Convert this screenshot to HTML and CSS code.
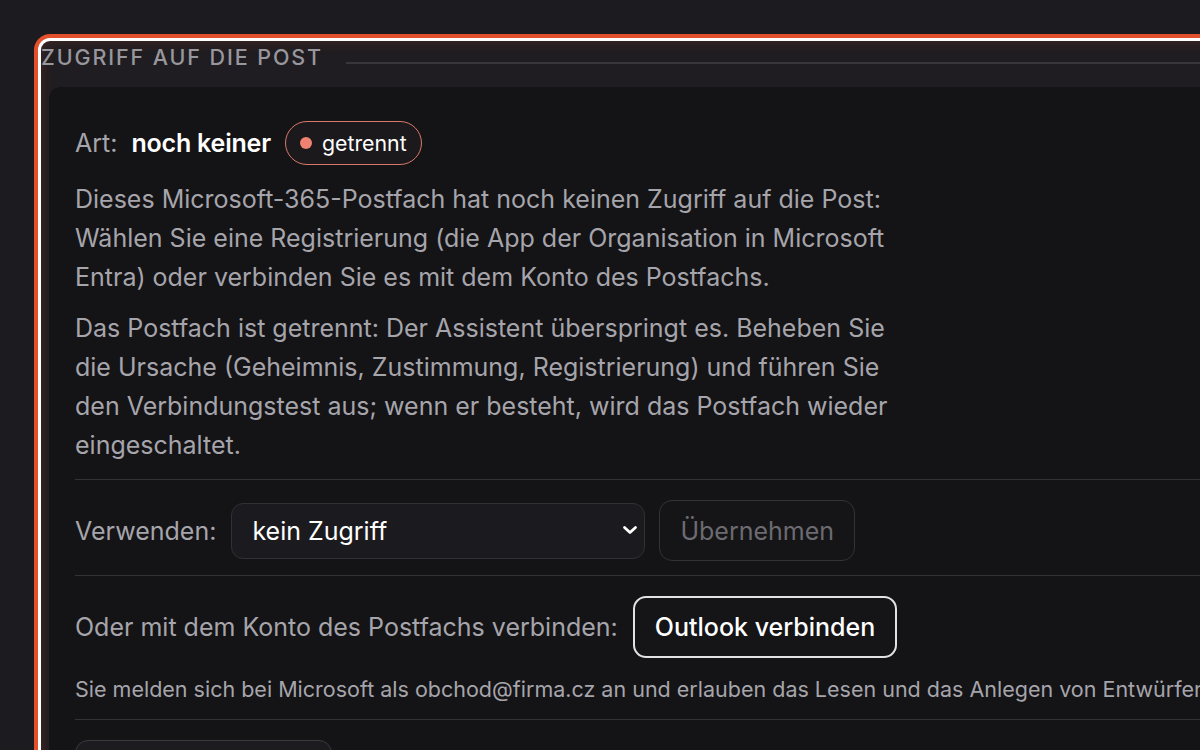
FILE: index.html
```html
<!DOCTYPE html>
<html lang="de">
<head>
    <meta charset="UTF-8">
    <meta name="viewport" content="width=device-width, initial-scale=1.0">
    <title>Postfach - Zugriff</title>
    <link rel="stylesheet" href="styles.css">
</head>
<body>
    <!-- Zugriff section (focused) -->
    <section class="access-section">
        <div class="section-head">
            <h2>Zugriff auf die Post</h2>
            <span class="head-line"></span>
        </div>

        <div class="access-card">
            <div class="type-row">
                <span class="type-label">Art:</span>
                <span class="type-value">noch keiner</span>
                <span class="status-badge"><span class="status-dot"></span>getrennt</span>
            </div>

            <p class="hint">Dieses Microsoft-365-Postfach hat noch keinen Zugriff auf die Post: Wählen Sie eine Registrierung (die App der Organisation in Microsoft Entra) oder verbinden Sie es mit dem Konto des Postfachs.</p>
            <p class="hint">Das Postfach ist getrennt: Der Assistent überspringt es. Beheben Sie die Ursache (Geheimnis, Zustimmung, Registrierung) und führen Sie den Verbindungstest aus; wenn er besteht, wird das Postfach wieder eingeschaltet.</p>

            <div class="card-block use-row">
                <label for="access-select">Verwenden:</label>
                <div class="select-wrap">
                    <select id="access-select">
                        <option>kein Zugriff</option>
                        <option>App-Registrierung</option>
                    </select>
                    <svg class="chevron" width="16" height="16" viewBox="0 0 16 16">
                        <path d="M2.5 5.5 L8 10.5 L13.5 5.5" fill="none" stroke="#fff" stroke-width="2.8" stroke-linecap="round" stroke-linejoin="round"/>
                    </svg>
                </div>
                <button class="btn" disabled>Übernehmen</button>
            </div>

            <div class="card-block">
                <div class="connect-row">
                    <span class="connect-label">Oder mit dem Konto des Postfachs verbinden:</span>
                    <button class="btn btn-outline">Outlook verbinden</button>
                </div>
                <p class="small-note">Sie melden sich bei Microsoft als obchod@firma.cz an und erlauben das Lesen und das Anlegen von Entwürfen.</p>
            </div>

            <div class="card-block">
                <button class="btn btn-wide">Verbindung testen</button>
            </div>
        </div>
    </section>
</body>
</html>
```

FILE: styles.css
```css
/* General */
body {
    margin: 0;
    padding: 38px 0 0 38px;
    background-color: #1c1b20;
    font-family: 'Inter', 'Noto Sans', sans-serif;
    color: #a6a5ab;
    overflow: hidden;
    height: 100vh;
    box-sizing: border-box;
}

/* Section with focus ring */
.access-section {
    width: 1240px;
    min-height: 900px;
    border: 3px solid #ffffff;
    border-radius: 12px;
    box-shadow: 0 0 0 4px #e2502c, inset 0 0 14px rgba(224, 83, 47, 0.22);
    background-color: #1f1d21;
    padding: 0 0 0 8px;
    box-sizing: border-box;
    overflow: hidden;
}

.section-head {
    display: flex;
    align-items: flex-start;
    gap: 23px;
    margin-left: -8px;
    height: 46px;
}

.section-head h2 {
    margin: 3px 0 0;
    font-size: 21.5px;
    line-height: 26px;
    font-weight: 500;
    letter-spacing: 1.9px;
    text-transform: uppercase;
    color: #98979d;
}

.head-line {
    flex: 1;
    height: 2px;
    margin-top: 21px;
    background-color: #37363b;
}

/* Card */
.access-card {
    background-color: #141316;
    border-radius: 12px 0 0 0;
    padding: 34px 0 0 26px;
    min-height: 800px;
    font-size: 25px;
}

.type-row {
    display: flex;
    align-items: center;
    margin-bottom: 15px;
}

.type-label {
    margin-right: 14px;
}

.type-value {
    color: #ffffff;
    font-weight: 600;
    letter-spacing: -0.2px;
    margin-right: 14px;
}

.status-badge {
    display: inline-flex;
    align-items: center;
    gap: 10px;
    height: 44px;
    padding: 0 14px;
    border: 1.5px solid #d9796b;
    border-radius: 22px;
    box-sizing: border-box;
    color: #ffffff;
    font-size: 21.3px;
    background-color: #1b191c;
}

.status-dot {
    width: 12px;
    height: 12px;
    border-radius: 50%;
    background-color: #ef8270;
}

.hint {
    margin: 0 0 12px;
    max-width: 830px;
    line-height: 39px;
}

/* Blocks separated by lines */
.card-block {
    border-top: 1.5px solid #333237;
    margin-top: 14px;
    padding-top: 20px;
}

.use-row {
    display: flex;
    align-items: center;
    gap: 14px;
}

.use-row label {
    margin-right: 1px;
}

.select-wrap {
    position: relative;
}

.select-wrap select {
    appearance: none;
    display: block;
    width: 414px;
    height: 56px;
    padding: 0 40px 0 20px;
    font-family: inherit;
    font-size: 25px;
    color: #ffffff;
    background-color: #1b1a1e;
    border: 1.5px solid #313035;
    border-radius: 12px;
}

.chevron {
    position: absolute;
    right: 7px;
    top: 19px;
}

.btn {
    height: 61px;
    padding: 0 20px;
    font-family: inherit;
    font-size: 25px;
    color: #ffffff;
    background-color: #151417;
    border: 1.5px solid #333237;
    border-radius: 13px;
    white-space: nowrap;
    cursor: pointer;
}

.btn:disabled {
    color: #6c6b71;
    cursor: default;
}

.btn-outline {
    height: 62px;
    border: 2px solid #e2e1e6;
    font-weight: 500;
}

.btn-wide {
    width: 257px;
    background-color: #1c1b1f;
    border-color: #3a393e;
}

.connect-row {
    display: flex;
    align-items: center;
    gap: 15px;
}

.small-note {
    margin: 17px 0 16px;
    font-size: 21.5px;
    line-height: 28px;
    white-space: nowrap;
}
```
